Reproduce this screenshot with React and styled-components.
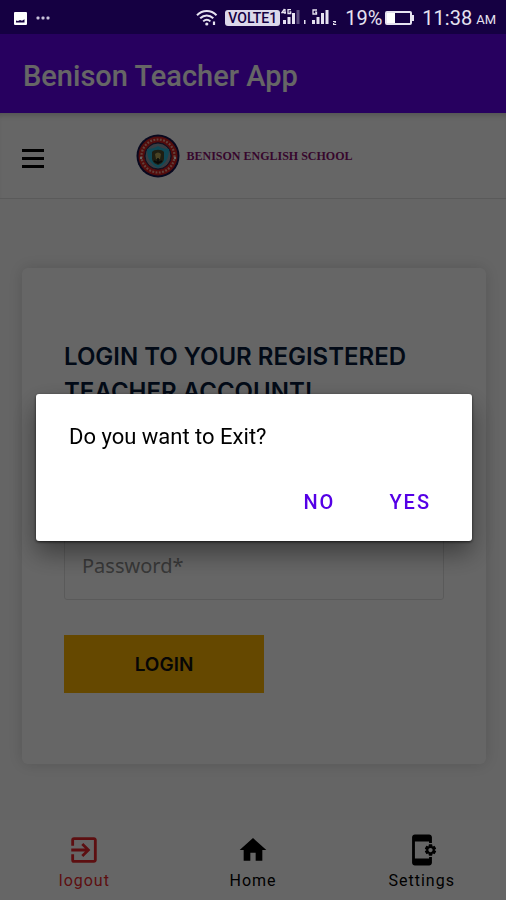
import React from "react";
import styled, { createGlobalStyle } from "styled-components";
import { MdExitToApp, MdHome, MdAppSettingsAlt } from "react-icons/md";

const GlobalStyle = createGlobalStyle`
  *, *::before, *::after { box-sizing: border-box; }
  body { margin: 0; background: #fff; font-family: Roboto, sans-serif; }
  button, input { font: inherit; }
  h1, h2, p { margin: 0; }
`;

const Screen = styled.div`
  display: flex;
  flex-direction: column;
  min-height: 100vh;
`;

const StatusBar = styled.div`
  position: relative;
  z-index: 2;
  display: flex;
  align-items: center;
  justify-content: space-between;
  height: 34px;
  padding: 2px 10px 0 14px;
  background: #150042;
  color: #e6e2f0;
`;

const StatusGroup = styled.div`
  display: flex;
  align-items: center;
  gap: ${(p) => p.$gap}px;
`;

const VolteBadge = styled.span`
  padding: 0 3px;
  border-radius: 3px;
  background: #dcd8ea;
  color: #150042;
  font-size: 14px;
  font-weight: 500;
  line-height: 16px;
`;

const StatusText = styled.span`
  font-size: ${(p) => (p.$small ? 13 : 20)}px;
  line-height: 24px;
  padding-top: ${(p) => (p.$small ? 4 : 0)}px;
`;

const AppBar = styled.header`
  display: flex;
  align-items: center;
  height: 79px;
  padding: 4px 23px 0;
  background: #6200ee;
  color: #fff;
`;

const AppTitle = styled.h1`
  font-size: 29px;
  font-weight: 500;
  line-height: 36px;
`;

const SiteHeader = styled.div`
  display: grid;
  grid-template-columns: 1fr auto 1fr;
  align-items: center;
  height: 86px;
  padding: 0 34px 0 17px;
  border-bottom: 1px solid #e0e0e0;
  box-shadow: inset 0 6px 6px -4px rgba(0, 0, 0, 0.22);
`;

const MenuButton = styled.button`
  display: flex;
  width: 32px;
  height: 32px;
  margin-top: 6px;
  padding: 4px;
  border: 0;
  background: none;
  color: #000;
`;

const Brand = styled.a`
  display: flex;
  align-items: center;
  gap: 6px;
  color: #8a1070;
  font-family: "Liberation Serif", serif;
  font-size: 12px;
  font-weight: 700;
  line-height: 44px;
  text-decoration: none;
  white-space: nowrap;
`;

const Main = styled.main`
  flex: 1;
  padding: 69px 20px 56px 22px;
  background: #fdfdfd;
`;

const LoginCard = styled.form`
  display: flex;
  flex-direction: column;
  padding: 71px 42px;
  border-radius: 6px;
  background: #fff;
  box-shadow: 0 0 16px rgba(0, 0, 0, 0.16);
`;

const CardTitle = styled.h2`
  margin-bottom: 27px;
  color: #061a3a;
  font-family: Inter, sans-serif;
  font-size: 24px;
  font-weight: 600;
  line-height: 35px;
`;

const Field = styled.input`
  width: 100%;
  height: 70px;
  margin-bottom: 24px;
  padding: 0 17px;
  border: 1px solid #e2e2e2;
  border-radius: 3px;
  background: #fff;
  font-family: "Noto Sans", sans-serif;
  font-size: 20px;
  &::placeholder { color: #8c8c8c; opacity: 1; }
`;

const LoginButton = styled.button`
  width: 200px;
  height: 58px;
  margin-top: 11px;
  border: 0;
  background: #fcb400;
  color: #111;
  font-family: Inter, sans-serif;
  font-size: 19px;
  font-weight: 600;
`;

const TabBar = styled.nav`
  display: flex;
  height: 80px;
  padding-top: 13px;
  background: #fff;
`;

const Tab = styled.a`
  display: flex;
  flex: 1;
  flex-direction: column;
  align-items: center;
  gap: 3px;
  color: ${(p) => (p.$danger ? "#e8272c" : "#000")};
  font-size: 16px;
  letter-spacing: 1px;
  line-height: 22px;
  text-decoration: none;
`;

const TabIcon = styled.span`
  display: flex;
  align-items: center;
  justify-content: center;
  height: 34px;
`;

const Scrim = styled.div`
  position: fixed;
  inset: 0;
  z-index: 1;
  display: flex;
  align-items: center;
  padding: 34px 34px 0 36px;
  background: rgba(0, 0, 0, 0.6);
`;

const Dialog = styled.div`
  flex: 1;
  padding: 28px 25px 15px 33px;
  border-radius: 3px;
  background: #fff;
  box-shadow: 0 1px 3px rgba(0, 0, 0, 0.7), 0 12px 26px rgba(0, 0, 0, 0.42);
`;

const DialogText = styled.p`
  margin-bottom: 26px;
  font-size: 22px;
  line-height: 30px;
`;

const DialogActions = styled.div`
  display: flex;
  justify-content: flex-end;
  gap: 22px;
`;

const DialogButton = styled.button`
  height: 48px;
  padding: 0 16px;
  border: 0;
  background: none;
  color: #5500e6;
  font-size: 20px;
  font-weight: 500;
  letter-spacing: 2px;
`;

const PictureIcon = () => (
  <svg width="13" height="13" viewBox="0 0 13 13" aria-hidden="true">
    <rect width="13" height="13" rx="1" fill="#fff" />
    <path d="M2 10.500V8.600l2 .5 2-1 2 .6 2.500-1.400v3.200z" fill="#150042" />
  </svg>
);

const DotsIcon = () => (
  <svg width="14" height="4" viewBox="0 0 14 4" fill="#c8c2da" aria-hidden="true">
    <rect x="0.5" y="0.5" width="3" height="3" rx="1" />
    <rect x="5.5" y="0.5" width="3" height="3" rx="1" />
    <rect x="10.5" y="0.5" width="3" height="3" rx="1" />
  </svg>
);

const WifiIcon = () => (
  <svg width="22" height="18" viewBox="0 0 22 18" fill="none" stroke="#e6e2f0" strokeWidth="2" aria-hidden="true">
    <path d="M1 6.200C6.500.6 15 .6 20.500 6.200" />
    <path d="M4.200 9.300c3.800-3.800 9.300-3.800 13.100 0" />
    <path d="M7.200 12.400c2.200-2.100 5-2.100 7.200 0" />
    <circle cx="10.800" cy="15" r="1.600" fill="#e6e2f0" stroke="none" />
    <path d="M18 12.500v3.500" strokeWidth="2.200" />
  </svg>
);

const SignalIcon = ({ full }) => (
  <svg width="28" height="20" viewBox="0 0 28 20" fill="#e6e2f0" aria-hidden="true">
    {full ? (
      <>
        <path d="M7 2H3v4h3.500V4.200H5" fill="none" stroke="#e6e2f0" strokeWidth="1.300" />
        <path d="M23 13h3v1.600l-2 .9v.5h2.200v1H23v-1.800l2-1V14h-2z" />
      </>
    ) : (
      <>
        <path d="M3.500 1 1 4.500h4M4 1v5M10 1.700H7v3.800h2.700V3.800H8.500" fill="none" stroke="#e6e2f0" strokeWidth="1.300" />
        <path d="M23 12h1.500v4H23z" />
      </>
    )}
    <rect x="2" y="12" width="3" height="4" />
    <rect x="6.500" y="9" width="3" height="7" />
    <rect x="11" y="5" width="3" height="11" />
    <rect x="15.500" y="2" width="3" height="14" opacity={full ? 1 : 0.35} />
  </svg>
);

const BatteryIcon = () => (
  <svg width="30" height="15" viewBox="0 0 30 15" aria-hidden="true">
    <rect x="1" y="1" width="25" height="12" rx="1" fill="none" stroke="#e6e2f0" strokeWidth="2" />
    <rect x="2" y="2" width="8" height="10" fill="#fff" />
    <rect x="27" y="4" width="2" height="6" fill="#e6e2f0" />
  </svg>
);

const MenuIcon = () => (
  <svg width="24" height="24" viewBox="0 0 24 24" fill="none" stroke="currentColor" strokeWidth="3" aria-hidden="true">
    <path d="M1 3.500h22M1 11.500h22M1 19.500h22" />
  </svg>
);

const Crest = () => (
  <svg width="44" height="44" viewBox="0 0 44 44" aria-hidden="true">
    <circle cx="22" cy="22" r="21.500" fill="#14144c" />
    <circle cx="22" cy="22" r="16.500" fill="none" stroke="#d0201f" strokeWidth="6" />
    <circle cx="22" cy="22" r="16.500" fill="none" stroke="#f1a594" strokeWidth="2.200" strokeDasharray="1.800 1.500" />
    <circle cx="22" cy="22" r="13" fill="#8f9aa6" stroke="#2a2a50" strokeWidth="1" />
    <path d="M11 15c4 0 8-1 11-3 3 2 7 3 11 3 0 9-3 15-11 19-8-4-11-10-11-19z" fill="#28b4d4" />
    <path d="M16 18c2-3 10-3 12 0v6c0 4-3 6-6 7-3-1-6-3-6-7z" fill="#4c4d2d" />
    <path d="M19 20c2-2 4-2 6 0l-1 5h-4z" fill="#b8a85b" />
    <path d="M18 27l4 2 4-2M22 24v6" stroke="#161616" strokeWidth="1.500" fill="none" />
    <circle cx="5" cy="24" r="1.200" fill="#fff" />
    <circle cx="39" cy="24" r="1.200" fill="#fff" />
  </svg>
);

export default function App() {
  return (
    <>
      <GlobalStyle />
      <Screen>
        <StatusBar>
          <StatusGroup $gap={9}>
            <PictureIcon />
            <DotsIcon />
          </StatusGroup>
          <StatusGroup $gap={7}>
            <WifiIcon />
            <StatusGroup $gap={1}>
              <VolteBadge>VOLTE1</VolteBadge>
              <SignalIcon />
              <SignalIcon full />
            </StatusGroup>
            <StatusGroup $gap={3}>
              <StatusText>19%</StatusText>
              <BatteryIcon />
            </StatusGroup>
            <StatusGroup $gap={4}>
              <StatusText>11:38</StatusText>
              <StatusText $small>AM</StatusText>
            </StatusGroup>
          </StatusGroup>
        </StatusBar>
        <AppBar>
          <AppTitle>Benison Teacher App</AppTitle>
        </AppBar>
        <SiteHeader>
          <MenuButton type="button" aria-label="Menu">
            <MenuIcon />
          </MenuButton>
          <Brand href="#">
            <Crest />
            BENISON ENGLISH SCHOOL
          </Brand>
        </SiteHeader>
        <Main>
          <LoginCard onSubmit={(e) => e.preventDefault()}>
            <CardTitle>LOGIN TO YOUR REGISTERED TEACHER ACCOUNT!</CardTitle>
            <Field type="text" aria-label="Username" />
            <Field type="password" aria-label="Password" placeholder="Password*" />
            <LoginButton type="submit">LOGIN</LoginButton>
          </LoginCard>
        </Main>
        <TabBar>
          <Tab href="#logout" $danger>
            <TabIcon><MdExitToApp size={34} /></TabIcon>
            logout
          </Tab>
          <Tab href="#home">
            <TabIcon><MdHome size={32} /></TabIcon>
            Home
          </Tab>
          <Tab href="#settings">
            <TabIcon><MdAppSettingsAlt size={34} /></TabIcon>
            Settings
          </Tab>
        </TabBar>
      </Screen>
      <Scrim>
        <Dialog role="dialog" aria-modal="true" aria-labelledby="exit-message">
          <DialogText id="exit-message">Do you want to Exit?</DialogText>
          <DialogActions>
            <DialogButton type="button">NO</DialogButton>
            <DialogButton type="button">YES</DialogButton>
          </DialogActions>
        </Dialog>
      </Scrim>
    </>
  );
}
